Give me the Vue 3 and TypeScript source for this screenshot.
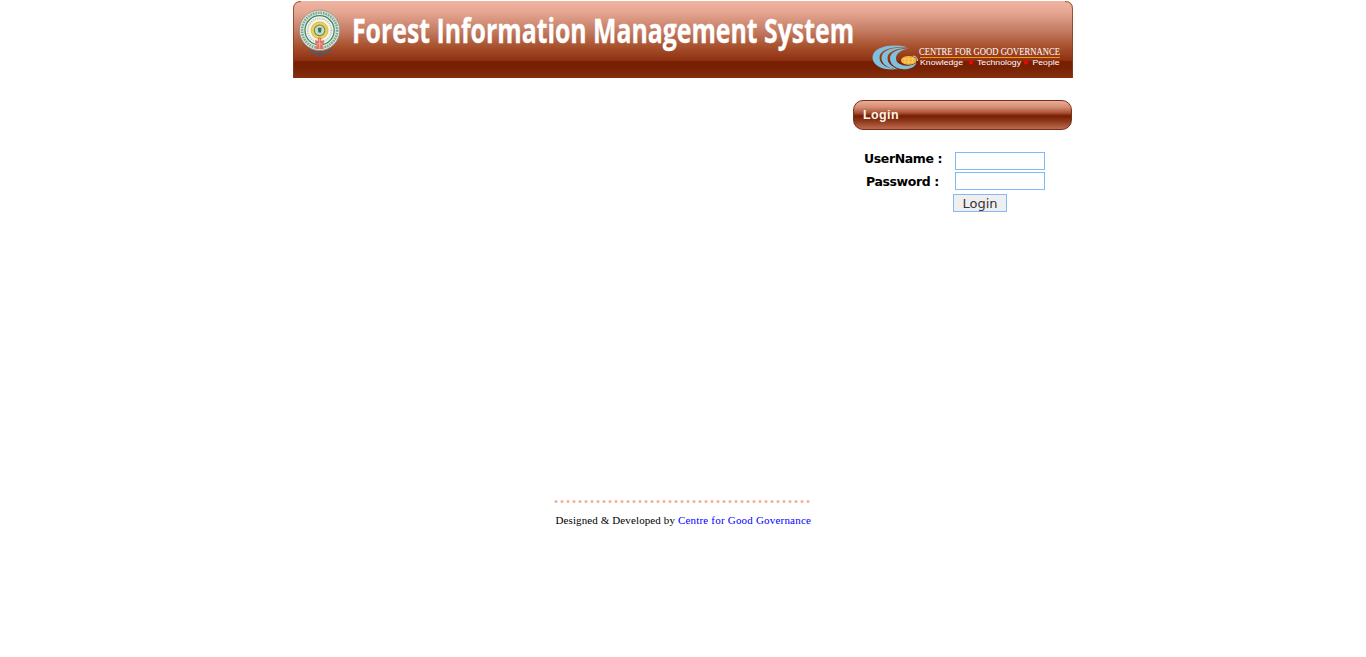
<script setup lang="ts">
import { ref } from 'vue'

const userName = ref('')
const password = ref('')
const dots = Array.from({ length: 43 }, (_, i) => 2 + i * 6)
</script>

<template>
  <div class="page">
    <header class="banner">
      <svg width="780" height="78" viewBox="0 0 780 78">
        <defs>
          <linearGradient id="bannerFill" x1="0" y1="1" x2="0" y2="78" gradientUnits="userSpaceOnUse">
            <stop offset="0" stop-color="#f0b5a3" />
            <stop offset="0.14" stop-color="#e6a793" />
            <stop offset="0.4" stop-color="#c27960" />
            <stop offset="0.58" stop-color="#a9532f" />
            <stop offset="0.77" stop-color="#8f3112" />
            <stop offset="0.785" stop-color="#7a1f03" />
            <stop offset="0.85" stop-color="#762004" />
            <stop offset="1" stop-color="#862f0e" />
          </linearGradient>
        </defs>
        <path d="M0 78V9Q0 1 8 1H772Q780 1 780 9V78Z" fill="url(#bannerFill)" />
        <path d="M.5 78V9Q.5 1.500 8 1.500M772 1.500Q779.500 1.500 779.500 9V78" fill="none" stroke="#8b381d" stroke-opacity=".8" />

        <g>
          <circle cx="26.600" cy="30.300" r="20.200" fill="#dfe6dc" stroke="#7f8a80" stroke-width=".7" />
          <circle cx="26.600" cy="30.300" r="17.600" fill="none" stroke="#7fa993" stroke-width="2.600" stroke-dasharray="1.700 .9" />
          <circle cx="26.600" cy="30.300" r="14.600" fill="#f3f4ea" stroke="#3f8668" stroke-width="1.300" />
          <circle cx="26.600" cy="30.300" r="11.800" fill="none" stroke="#b3c4b2" stroke-width="1.500" stroke-dasharray="1.200 1" />
          <circle cx="26.600" cy="30.300" r="8.400" fill="#f2cf4c" stroke="#d8ac45" stroke-width=".8" />
          <circle cx="26.600" cy="30.300" r="5.300" fill="#c9dcc0" stroke="#5c8a6c" stroke-width="1.100" />
          <path d="M24.800 27.800h3.800l-.6 4.800h-2.600z" fill="#2e7168" />
          <path d="M25.200 37.500h2.800l.5 3.500 2.500-1v3l-1.600 2 1.200 4h-8l1.200-4-1.600-2v-3l2.500 1z" fill="#e87063" />
          <path d="M23.500 44h6M26.600 38.500v10" stroke="#f4b6a6" stroke-width=".8" />
          <path d="M16 50.800l4 1.600 5 .8M29.500 53l4-.8 5.500-1.900" fill="none" stroke="#2c6a88" stroke-width="1.900" stroke-dasharray="2.300 .6" />
          <path d="M27 52.500v4" stroke="#1f5f9c" stroke-width="1.900" />
        </g>

        <text class="title" transform="translate(59 42.600) scale(.78 1)" textLength="643.600" lengthAdjust="spacingAndGlyphs">Forest Information Management System</text>

        <g>
          <g fill="#7fc0dd">
            <path d="M614 46.800C594 43 579.500 48.500 579.500 57.500C579.500 65.500 590 70.500 602 69.400C592.500 67.500 586.500 63.500 586.500 57.500C586.500 50.500 597 46.500 614 46.800Z" />
            <path d="M615 47.600C599 46.500 588.500 50.500 588.500 58C588.500 64 595 69 605 69.400C598.500 66.500 594.500 63 594.500 58C594.500 52 603 48.500 615 47.600Z" />
            <path d="M616.500 48.600C605 49 597 52 597 58.500C597 65 603.500 69.300 611 69.300C617.500 69.300 622 67 623.500 62.800C620 65.300 616 66.300 612 65.600C606 64.600 603 62 603 58.500C603 53 608.500 50 616.500 48.600Z" />
          </g>
          <ellipse cx="615.700" cy="60.400" rx="7.800" ry="4.300" fill="#f3ad32" />
          <path d="M609 59h13.500M609 62h13.500M612 57.500v6M615.700 56.500v8M619.400 57.500v6" stroke="#fbdc82" stroke-width=".6" />
          <path d="M620 56q4.500 .5 4.500 5" fill="none" stroke="#b5dbe6" stroke-width="1" />
          <text class="brand" transform="translate(626 55.200) scale(.85 1)" textLength="165.900" lengthAdjust="spacingAndGlyphs">CENTRE FOR GOOD GOVERNANCE</text>
          <path d="M627 57.500H767" stroke="#f69b0b" />
          <text class="motto" x="627" y="65.400" textLength="43" lengthAdjust="spacingAndGlyphs">Knowledge</text>
          <circle cx="678" cy="62.700" r="1.900" fill="#f00" />
          <text class="motto" x="684" y="65.400" textLength="44" lengthAdjust="spacingAndGlyphs">Technology</text>
          <circle cx="733" cy="62.700" r="1.900" fill="#f00" />
          <text class="motto" x="739.500" y="65.400" textLength="27" lengthAdjust="spacingAndGlyphs">People</text>
        </g>
      </svg>
    </header>

    <main class="content">
      <form class="login" @submit.prevent>
        <h2 class="heading">Login</h2>
        <div class="row">
          <label class="label" for="user">UserName :</label>
          <input id="user" v-model="userName" class="field" type="text" />
        </div>
        <div class="row second">
          <label class="label" for="pass">Password :</label>
          <input id="pass" v-model="password" class="field" type="password" />
        </div>
        <button class="submit" type="submit">Login</button>
      </form>
    </main>

    <footer class="footer">
      <svg class="dots" width="256" height="4" viewBox="0 0 256 4">
        <circle v-for="x in dots" :key="x" :cx="x" cy="2.500" r="1.500" fill="#efb09e" />
      </svg>
      <p class="credit">Designed &amp; Developed by <a class="link">Centre for Good Governance</a></p>
    </footer>
  </div>
</template>

<style>
body {
  margin: 0;
  background: #fff;
}
</style>

<style scoped>
.page {
  width: 780px;
  margin: 0 auto;
}
.banner {
  height: 78px;
}
.banner svg {
  display: block;
}
.title {
  font: bold 34px "Open Sans", sans-serif;
  fill: #fff;
  stroke: #fff;
  stroke-width: 0.300px;
}
.brand {
  font: 10px "Liberation Serif", serif;
  fill: #fff;
}
.motto {
  font: 7.500px "Liberation Sans", sans-serif;
  fill: #fff;
}
.content {
  display: flex;
  justify-content: flex-end;
  height: 421px;
}
.login {
  width: 219px;
  margin: 22px 1px 0 0;
}
.heading {
  box-sizing: border-box;
  height: 30px;
  margin: 0 0 22px;
  padding-left: 9px;
  border: 1px solid #7d3019;
  border-radius: 10px;
  background: linear-gradient(#e8ad9b 0, #d58d75 22%, #a94f31 43%, #741f05 53%, #8b3518 70%, #bd6b50 100%);
  color: #fff3e8;
  font: bold 12.500px/28px "Liberation Sans", sans-serif;
  letter-spacing: 0.400px;
}
.row {
  display: flex;
  height: 18px;
}
.second {
  margin-top: 2px;
}
.label {
  width: 102px;
  box-sizing: border-box;
  padding-left: 11px;
  font: bold 12.500px/14px "DejaVu Sans", sans-serif;
  letter-spacing: -0.380px;
  white-space: nowrap;
}
.second .label {
  padding-left: 13px;
  line-height: 19px;
}
.field {
  box-sizing: border-box;
  width: 90px;
  height: 18px;
  margin: 0;
  padding: 1px 2px;
  border: 1px solid #7fbcf7;
  background: #fff;
  outline: none;
  font: 12px "DejaVu Sans", sans-serif;
}
.submit {
  display: block;
  box-sizing: border-box;
  width: 54px;
  height: 18px;
  margin: 4px 0 0 100px;
  padding: 1px 0 0;
  border: 1px solid #7fbcf7;
  background: #efefef;
  color: #333;
  font: 13px/15px "DejaVu Sans", sans-serif;
}
.footer {
  width: 258px;
  margin-left: 261px;
}
.dots {
  display: block;
}
.credit {
  margin: 10px 0 0 1.500px;
  font: 11px/14px "Liberation Serif", serif;
  letter-spacing: 0.110px;
  white-space: nowrap;
}
.link {
  color: #00f;
  letter-spacing: 0.200px;
}
</style>
